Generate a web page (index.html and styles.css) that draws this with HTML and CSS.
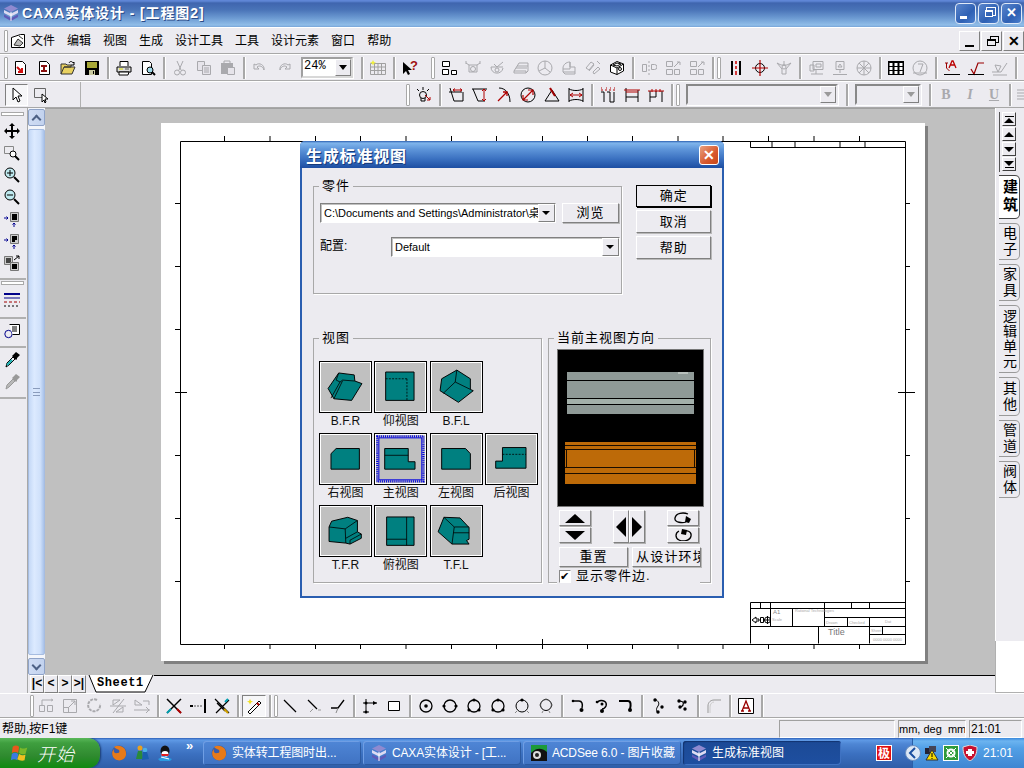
FILE: index.html
```html
<!DOCTYPE html>
<html lang="zh">
<head>
<meta charset="utf-8">
<title>CAXA实体设计</title>
<link rel="stylesheet" href="styles.css">
</head>
<body>
<svg class="sprite" xmlns="http://www.w3.org/2000/svg">
<defs>
<symbol id="caxa" viewBox="0 0 16 16"><path d="M8 0l7 3.500-7 3.500-7-3.500z" fill="#8f8ad0"/><path d="M1 5l7 3.500L15 5v3l-7 3.500L1 8z" fill="#dcdaf2"/><path d="M1 9.500L8 13l7-3.500V12l-7 4-7-4z" fill="#5f5ab8"/><path d="M8 7v9" stroke="#fff"/></symbol>
<symbol id="menudoc" viewBox="0 0 16 16"><path d="M1.500 4.500l9-3h4v13h-13z" fill="#fff" stroke="#000"/><path d="M4 12l4-6 5 4-3 3zM9 3l4 3" fill="#bbb" stroke="#333"/></symbol>
<symbol id="docred" viewBox="0 0 16 16"><path d="M3.500 1.500h7l3 3v10h-10z" fill="#fff" stroke="#000"/><path d="M5 7l5 5m0-4v4H6" stroke="#d01010" stroke-width="2" fill="none"/></symbol>
<symbol id="docbar" viewBox="0 0 16 16"><path d="M3.500 1.500h7l3 3v10h-10z" fill="#fff" stroke="#000"/><path d="M5 5h6v2H9v3h2v2H5v-2h2V7H5z" fill="#8a1010"/></symbol>
<symbol id="open" viewBox="0 0 16 16"><path d="M1 14V4h5l1 1h4v2H4l-3 7h11l3-7H4" fill="#e8d060" stroke="#333"/><path d="M9 3c1-2 3-2 4 0l1-1v3h-3" fill="none" stroke="#000"/></symbol>
<symbol id="save" viewBox="0 0 16 16"><path d="M1 1h14v14H1z" fill="#000"/><path d="M3 2h10v6H3z" fill="#a8a838"/><path d="M5 10h6v5H5z" fill="#c8c8a0"/><path d="M9 11h1v3H9z" fill="#000"/></symbol>
<symbol id="print" viewBox="0 0 16 16"><path d="M4 6V1.500h8V6" fill="#fff" stroke="#000"/><path d="M1 7h14v5H1z" fill="#ddd" stroke="#000"/><path d="M3 12h10l-1 3H3z" fill="#fff" stroke="#000"/><path d="M3 9h4" stroke="#dd0"/><path d="M9 9h4" stroke="#555"/></symbol>
<symbol id="prev" viewBox="0 0 16 16"><path d="M2.500 1.500h7l2 2v11h-9z" fill="#fff" stroke="#000"/><circle cx="10" cy="10" r="3" fill="#9fd8e8" stroke="#000"/><path d="M12 12l3 3" stroke="#000" stroke-width="2"/></symbol>
<symbol id="cut" viewBox="0 0 16 16"><g fill="none" stroke="currentColor"><path d="M5 1l4 9M11 1l-4 9"/><circle cx="5" cy="12.500" r="2.500"/><circle cx="11" cy="12.500" r="2.500"/></g></symbol>
<symbol id="copy" viewBox="0 0 16 16"><g fill="#e6e4ea" stroke="currentColor"><path d="M1.500 1.500h7v9h-7z"/><path d="M6.500 5.500h8v9h-8z"/><path d="M8 8h5M8 10h5M8 12h5"/></g></symbol>
<symbol id="paste" viewBox="0 0 16 16"><path d="M1 3h12v11H1z" fill="currentColor"/><path d="M4 1h6v3H4z" fill="none" stroke="currentColor"/><path d="M7.500 7.500h7v7h-7z" fill="#e6e4ea" stroke="currentColor"/></symbol>
<symbol id="undo" viewBox="0 0 16 16"><path d="M2 4v5h5L5 7c2-2 6-1 7 3 1-5-5-8-8-5z" fill="none" stroke="currentColor"/></symbol>
<symbol id="redo" viewBox="0 0 16 16"><path d="M14 4v5H9l2-2c-2-2-6-1-7 3-1-5 5-8 8-5z" fill="none" stroke="currentColor"/></symbol>
<symbol id="table" viewBox="0 0 16 16"><path d="M.5 3.500h15v11H.5zM.5 7h15M.5 10.500h15M4.500 3.500v11M8 3.500v11M11.500 3.500v11" fill="none" stroke="#a0a0a0"/><path d="M3 0l1 2 2 .5-2 1-1 2-1-2-2-1 2-.5z" fill="#f0f040"/></symbol>
<symbol id="help" viewBox="0 0 16 16"><path d="M1 2v12l3-3 2 4 2-1-2-4h4z" fill="#000"/><text x="8" y="10" font-family="Liberation Sans" font-weight="700" font-size="13" fill="#a01010">?</text></symbol>
<symbol id="blocks" viewBox="0 0 16 16"><path d="M1.500 1.500h7v5h-7zM1.500 9.500h6v5h-6zM10.500 10.500h5v4h-5z" fill="#fff" stroke="#000"/></symbol>
<symbol id="part1" viewBox="0 0 16 16"><g fill="none" stroke="currentColor"><path d="M1 3l3 2h8l3-2M4 5v7h8V5"/><circle cx="8" cy="9" r="2.500"/><path d="M1 1v3M15 1v3"/></g></symbol>
<symbol id="part2" viewBox="0 0 16 16"><g fill="none" stroke="currentColor"><path d="M2 7c0 8 11 8 12 1M2 7h12M5 4l3 3 6-5"/><circle cx="8" cy="10" r="2"/></g></symbol>
<symbol id="part3" viewBox="0 0 16 16"><g fill="none" stroke="currentColor"><path d="M1 11l5-8h9v8l-2 2H1zM3 8h11M4 6h11M1 11h12v2"/></g></symbol>
<symbol id="clock" viewBox="0 0 16 16"><g fill="none" stroke="currentColor"><circle cx="8" cy="8" r="7"/><path d="M8 1v7l5 4M8 8l-6 3"/></g></symbol>
<symbol id="part4" viewBox="0 0 16 16"><g fill="none" stroke="currentColor"><path d="M2 12V8c0-3 3-6 7-6v5h5v5H2zM2 9h7V2"/><path d="M2 12l2 2h10v-2"/></g></symbol>
<symbol id="part5" viewBox="0 0 16 16"><g fill="none" stroke="currentColor"><path d="M1 8l5-6 3 2-5 6zM4 11l5-6M9 14l6-5-2-2-5 5z"/><path d="M12 1l3 3"/></g></symbol>
<symbol id="cube" viewBox="0 0 16 16"><path d="M1.500 5L8 1.500 14.500 4v7L8 14.500 1.500 12z" fill="#fff" stroke="#000"/><path d="M1.500 5L8 8v6.500M8 8l6.500-4M4 5l4-2 4 1-4 2z" fill="none" stroke="#000"/><circle cx="11" cy="9" r="1.500" fill="none" stroke="#000"/></symbol>
<symbol id="mir" viewBox="0 0 16 16"><g fill="none" stroke="currentColor"><path d="M1.500 4.500h4v7h-4zM10.500 4.500h3a2 2 0 010 5h-3zM8 1v2M8 5v2M8 9v2M8 13v2"/></g></symbol>
<symbol id="mir2" viewBox="0 0 16 16"><g fill="none" stroke="currentColor"><path d="M1.500 1.500h6v5h-6zM1.500 9.500h6v5h-6zM9.500 9.500h5v5h-5zM9 7l5-5M12 2h3v3"/></g></symbol>
<symbol id="center" viewBox="0 0 16 16"><path d="M4 1v14M12 1v14" stroke="#000" stroke-width="2"/><path d="M8 1v3M8 6v3M8 11v4" stroke="#c00" stroke-width="1.500"/></symbol>
<symbol id="target" viewBox="0 0 16 16"><circle cx="8" cy="8" r="4.500" fill="none" stroke="#000"/><path d="M0 8h16M8 0v16" stroke="#b00000" stroke-width="1.200"/></symbol>
<symbol id="tri" viewBox="0 0 16 16"><g fill="none" stroke="currentColor"><path d="M1 3l4 2h6l4-2-5 6v5H6V9zM8 1v5"/><circle cx="8" cy="7" r="2"/></g></symbol>
<symbol id="surf1" viewBox="0 0 16 16"><g fill="none" stroke="currentColor"><path d="M5 1.500h10v8H5zM2 5h4v6H2zM8 4h5v3H8zM3 14h12M8 10v4"/></g></symbol>
<symbol id="surf2" viewBox="0 0 16 16"><g fill="none" stroke="currentColor"><path d="M4 1.500h8v8H4zM8 4l2 3H6zM8 10v3M1 14.500h14"/></g></symbol>
<symbol id="surf3" viewBox="0 0 16 16"><g fill="none" stroke="currentColor"><circle cx="8" cy="8" r="7"/><path d="M1 8h14M8 1v14M3 3l10 10M13 3L3 13"/></g></symbol>
<symbol id="tbl2" viewBox="0 0 16 16"><path d="M0 1h16v14H0z" fill="#000"/><path d="M1.500 3h3v3h-3zM6.500 3h3v3h-3zM11.500 3h3v3h-3zM1.500 7h3v3h-3zM6.500 7h3v3h-3zM11.500 7h3v3h-3zM1.500 11h3v3h-3zM6.500 11h3v3h-3zM11.500 11h3v3h-3z" fill="#fff"/></symbol>
<symbol id="seven" viewBox="0 0 16 16"><g fill="none" stroke="currentColor"><circle cx="8" cy="8" r="7"/><path d="M6 4h5l-3 8"/><path d="M1 13h14"/></g></symbol>
<symbol id="dimA" viewBox="0 0 16 16"><path d="M1 3h3M2.500 3v5l3 3" fill="none" stroke="#900"/><path d="M5 8l3-7h1l3 7M6.500 5h4" fill="none" stroke="#b00" stroke-width="1.300"/><path d="M0 14.500h16" stroke="#000"/></symbol>
<symbol id="rough" viewBox="0 0 16 16"><path d="M3 9l3 5 4-11h6" fill="none" stroke="#900" stroke-width="1.200"/><path d="M0 14.500h16" stroke="#000"/></symbol>
<symbol id="weld" viewBox="0 0 16 16"><g fill="none" stroke="currentColor"><path d="M0 12h9l6-9M3 5l3 7 3-6zM1 15h14"/></g></symbol>
<symbol id="light" viewBox="0 0 16 16"><g fill="none" stroke="#000"><circle cx="7" cy="8" r="3.500"/><path d="M5 11v3h4v-3M3 4L1 2M7 3V0M11 4l2-2"/></g><path d="M9 8l5 5m-3 0h3v-3" stroke="#b00000" fill="none"/></symbol>
<symbol id="d1" viewBox="0 0 16 16"><path d="M1 5h13M2 1l4 13h9V5" fill="none" stroke="#000"/><path d="M5 3h9M5 3l2-1.500M5 3l2 1.500M14 3l-2-1.500M14 3l-2 1.500" stroke="#b00000" fill="none"/></symbol>
<symbol id="d2" viewBox="0 0 16 16"><path d="M0 2h15M1 2l5 12h7" fill="none" stroke="#000"/><path d="M12 2v12M10 4l2-2 2 2M10 12l2 2 2-2" stroke="#b00000" fill="none"/></symbol>
<symbol id="d3" viewBox="0 0 16 16"><path d="M3 1c6 0 11 5 11 14" fill="none" stroke="#000"/><path d="M2 14L11 5M7 5h4v4" stroke="#b00000" fill="none" stroke-width="1.300"/></symbol>
<symbol id="d4" viewBox="0 0 16 16"><circle cx="8" cy="8" r="7" fill="none" stroke="#000"/><path d="M3 13L13 3M8 3h5v5M3 8v5h5" stroke="#b00000" fill="none" stroke-width="1.200"/></symbol>
<symbol id="d5" viewBox="0 0 16 16"><path d="M8 3l7 11H1z" fill="none" stroke="#000"/><path d="M6 1l5 8" stroke="#a00000" stroke-width="2"/></symbol>
<symbol id="d6" viewBox="0 0 16 16"><path d="M1 2c4 2 10 2 14 0M1 14c4-2 10-2 14 0M1 1v14M15 1v14" fill="none" stroke="#000"/><path d="M2 8h12M2 8l3-2M2 8l3 2M14 8l-3-2M14 8l-3 2" stroke="#b00000" fill="none"/></symbol>
<symbol id="e1" viewBox="0 0 16 16"><path d="M1 5h3v10M7 5h3v10h4V5" fill="none" stroke="#000"/><path d="M1 1h1M6 1h1M10 1h1M14 1h1M1 3h14" stroke="#b00000" stroke-dasharray="2 2"/></symbol>
<symbol id="e2" viewBox="0 0 16 16"><path d="M2 1v14M14 3v12M2 10h12" fill="none" stroke="#000"/><path d="M2 5h12M0 3h16" stroke="#b00000" fill="none"/></symbol>
<symbol id="e3" viewBox="0 0 16 16"><path d="M2 4v11M14 4v11M8 4v6M2 10h6" fill="none" stroke="#000"/><path d="M0 4h16M4 2v3M8 2v3M12 2v3" stroke="#b00000" fill="none"/></symbol>
<symbol id="lines" viewBox="0 0 16 16"><path d="M1 3h14M1 6h14M1 9h14M1 12h14" stroke="currentColor"/></symbol>
<symbol id="move" viewBox="0 0 16 16"><path d="M8 0l3 3H9v4h4V5l3 3-3 3V9H9v4h2l-3 3-3-3h2V9H3v2L0 8l3-3v2h4V3H5z" fill="#000"/></symbol>
<symbol id="zrect" viewBox="0 0 16 16"><path d="M.5 1.500h9v7h-9z" fill="none" stroke="#888"/><circle cx="9" cy="9" r="3" fill="#fff" stroke="#000"/><path d="M11 11l4 4" stroke="#000" stroke-width="2"/></symbol>
<symbol id="zplus" viewBox="0 0 16 16"><circle cx="6" cy="6" r="5" fill="#bfeaf0" stroke="#000"/><path d="M3 6h6M6 3v6" stroke="#000"/><path d="M10 10l5 5" stroke="#000" stroke-width="2"/></symbol>
<symbol id="zminus" viewBox="0 0 16 16"><circle cx="6" cy="6" r="5" fill="#bfeaf0" stroke="#000"/><path d="M3 6h6" stroke="#000"/><path d="M10 10l5 5" stroke="#000" stroke-width="2"/></symbol>
<symbol id="v1" viewBox="0 0 16 16"><path d="M6.500 1.500h8v9h-8z" fill="#ccc" stroke="#777"/><path d="M8 3h5v6H8z" fill="#000"/><path d="M0 7h4M2.500 5.500L4 7l-1.500 1.500M10 12v4M8.500 13.500L10 12l1.500 1.500" stroke="#000090" fill="none"/></symbol>
<symbol id="v2" viewBox="0 0 16 16"><path d="M6.500 1.500h8v9h-8z" fill="#ccc" stroke="#777"/><path d="M8 3h5v4h-2v2H8z" fill="#000"/><path d="M0 7h4M2.500 5.500L4 7l-1.500 1.500M10 12v4M8.500 13.500L10 12l1.500 1.500" stroke="#000090" fill="none"/></symbol>
<symbol id="v3" viewBox="0 0 16 16"><path d="M.5 1.500h8v8h-8z" fill="#ccc" stroke="#777"/><path d="M2 3h5v5H2z" fill="#444"/><path d="M6.500 7.500h8v8h-8z" fill="#ccc" stroke="#777"/><path d="M8 9h5v5H8z" fill="#000"/><path d="M10 5l5-4m-3 0h3v3" stroke="#000" fill="none"/></symbol>
<symbol id="ltypes" viewBox="0 0 16 16"><path d="M0 2h16" stroke="#00008a" stroke-width="2"/><path d="M0 6h16" stroke="#00008a"/><path d="M0 10h16" stroke="#a00000" stroke-dasharray="3 2"/><path d="M0 14h16" stroke="#000" stroke-dasharray="2 2"/></symbol>
<symbol id="prop" viewBox="0 0 16 16"><circle cx="4.500" cy="11" r="3.700" fill="none" stroke="#00008a"/><path d="M5.500 1.500h10v10h-7" fill="#fff" stroke="#000"/><path d="M8 4h5M8 6h5M8 8h5" stroke="#000"/></symbol>
<symbol id="drop" viewBox="0 0 16 16"><path d="M2 15l1-4 6-6 2 2-6 6z" fill="none" stroke="#000"/><path d="M3 13l5-5" stroke="#18b0b0" stroke-width="2"/><path d="M9 3l3-3 4 3-3 3v1l-1 1-4-4 1-1z" fill="#000"/></symbol>
<symbol id="drop2" viewBox="0 0 16 16"><path d="M2 15l1-4 6-6 2 2-6 6z" fill="#b8b8b8" stroke="#999"/><path d="M9 3l3-3 4 3-3 3v1l-1 1-4-4 1-1z" fill="#999"/></symbol>
<symbol id="b1" viewBox="0 0 16 16"><g fill="none" stroke="currentColor"><path d="M1.500 7.500h5v6h-5zM9.500 7.500h5v6h-5zM4 7V2M4 2h9M13 1l2 1-2 1"/></g></symbol>
<symbol id="b2" viewBox="0 0 16 16"><g fill="none" stroke="currentColor"><path d="M1.500 1.500h13v13h-13zM1.500 9.500h5v5M6 10l7-7M9 3h4v4"/></g></symbol>
<symbol id="b3" viewBox="0 0 16 16"><path d="M11 2a6 6 0 103 4" fill="none" stroke="currentColor" stroke-width="2" stroke-dasharray="3 1"/></symbol>
<symbol id="b4" viewBox="0 0 16 16"><g fill="none" stroke="currentColor"><path d="M0 8h16M3 15L14 1M3 2h7l-7 5zM13 14H6l7-5z"/></g></symbol>
<symbol id="b5" viewBox="0 0 16 16"><g fill="none" stroke="currentColor"><path d="M1 2l7 5H1zM0 12h16M9 3h6v4M12 9l3 3-3 3"/></g></symbol>
<symbol id="trim" viewBox="0 0 16 16"><path d="M1 1l14 14" stroke="#000" stroke-width="1.500"/><path d="M1 15L15 1" stroke="#000" stroke-width="1.500"/><path d="M11 11l4 4" stroke="#b00000" stroke-width="2"/><path d="M1 15l4-4" stroke="#00a0b0" stroke-width="2"/></symbol>
<symbol id="ext" viewBox="0 0 16 16"><path d="M0 8h3" stroke="#000" stroke-width="2"/><path d="M4 8h9" stroke="#555" stroke-dasharray="2 1"/><path d="M15 1v14" stroke="#000" stroke-width="2"/></symbol>
<symbol id="trim2" viewBox="0 0 16 16"><path d="M2 15L15 2M1 1l14 14M3 5l8 8" stroke="#000" fill="none" stroke-width="1.200"/><path d="M11 4l3-3" stroke="#00a0b0" stroke-width="2"/><path d="M10 11l4 4" stroke="#d0a000" stroke-width="2"/></symbol>
<symbol id="pen" viewBox="0 0 16 16"><path d="M2 14L13 3l2 2L4 16z" fill="#fff" stroke="#000"/><path d="M11 5l2 2" stroke="#b00000" stroke-width="2"/><path d="M4 1l1 2 2 .5-2 1-1 2-1-2-2-1 2-.5z" fill="#f0e020"/></symbol>
<symbol id="ln1" viewBox="0 0 16 16"><path d="M2 2l12 12" stroke="#000" stroke-width="1.300"/></symbol>
<symbol id="ln2" viewBox="0 0 16 16"><path d="M2 2l9 9" stroke="#000" stroke-width="1.300"/><path d="M7 11l-3 3M12 12h3" stroke="#999"/></symbol>
<symbol id="ln3" viewBox="0 0 16 16"><path d="M1 10h7l6-8" stroke="#000" fill="none" stroke-width="1.300"/><path d="M8 10l-2 5" stroke="#888"/></symbol>
<symbol id="ortho" viewBox="0 0 16 16"><path d="M4 1v14M1 5h14M1 14h6" stroke="#000" fill="none"/><path d="M11 3l4 2-4 2z" fill="#000"/><circle cx="4" cy="5" r="1.500"/><circle cx="4" cy="14" r="1.500"/></symbol>
<symbol id="rect" viewBox="0 0 16 16"><path d="M2.500 3.500h11v9h-11z" fill="#fff" stroke="#000"/></symbol>
<symbol id="c1" viewBox="0 0 16 16"><circle cx="8" cy="8" r="6" fill="none" stroke="#000" stroke-width="1.300"/><circle cx="8" cy="8" r="1.800"/></symbol>
<symbol id="c2" viewBox="0 0 16 16"><circle cx="8" cy="8" r="6" fill="none" stroke="#000" stroke-width="1.300"/><circle cx="2" cy="8" r="1.600"/><circle cx="14" cy="8" r="1.600"/></symbol>
<symbol id="c3" viewBox="0 0 16 16"><circle cx="8" cy="8" r="6" fill="none" stroke="#000" stroke-width="1.300"/><circle cx="8" cy="2" r="1.600"/><circle cx="3" cy="12" r="1.600"/><circle cx="13" cy="12" r="1.600"/></symbol>
<symbol id="c4" viewBox="0 0 16 16"><circle cx="8" cy="8" r="6" fill="none" stroke="#000"/><circle cx="8" cy="2" r="1.600"/><path d="M3 13l-2 2M13 13l2 2" stroke="#888"/></symbol>
<symbol id="c5" viewBox="0 0 16 16"><circle cx="8" cy="7" r="5.500" fill="none" stroke="#000"/><path d="M1 7h2M13 7h2M5 13l-1 2M11 13l1 2M8 0v2" stroke="#888"/></symbol>
<symbol id="a1" viewBox="0 0 16 16"><path d="M2 3h7c3 0 4 3 3 7" fill="none" stroke="#000" stroke-width="1.500"/><circle cx="11.500" cy="12" r="2"/><circle cx="3" cy="3" r="1.300"/></symbol>
<symbol id="a2" viewBox="0 0 16 16"><path d="M3 5c2-4 11-3 9 3-1 2-3 3-4 3" fill="none" stroke="#000" stroke-width="1.500"/><circle cx="8" cy="13" r="2"/><circle cx="8" cy="6" r="1.500"/><circle cx="3" cy="4" r="1.300"/></symbol>
<symbol id="a3" viewBox="0 0 16 16"><path d="M1 3h9c3 0 3 4 2 8" fill="none" stroke="#000" stroke-width="2"/><circle cx="12" cy="12" r="2"/></symbol>
<symbol id="s1" viewBox="0 0 16 16"><path d="M5 1c3 2 5 4 3 7s-2 4 0 7" fill="none" stroke="#000"/><circle cx="5" cy="2" r="1.700"/><circle cx="12" cy="9" r="1.700"/><circle cx="8" cy="14" r="1.700"/></symbol>
<symbol id="s2" viewBox="0 0 16 16"><path d="M5 3c6 0 5 4 2 6" fill="none" stroke="#000" stroke-width="1.200"/><circle cx="5" cy="3" r="1.700"/><circle cx="11" cy="4" r="1.700"/><circle cx="6" cy="9" r="1.700"/><circle cx="11" cy="11" r="1.700"/></symbol>
<symbol id="fil" viewBox="0 0 16 16"><path d="M2 15V8c0-4 3-6 6-6h7" fill="none" stroke="#999"/><path d="M4 15V9c0-3 2-5 4-5" fill="none" stroke="#ccc"/></symbol>
<symbol id="boxA" viewBox="0 0 16 16"><path d="M.5.500h15v15H.5z" fill="#fff" stroke="#000"/><path d="M4 13l4-10 4 10M5 10h6M3 13h3M10 13h3" fill="none" stroke="#900" stroke-width="1.300"/></symbol>
<symbol id="ff" viewBox="0 0 16 16"><circle cx="8" cy="8" r="7.500" fill="#3a5da8"/><path d="M3 2c5-3 13 0 12 8-1 5-7 7-11 4C1 12 0 7 3 4c-1 3 1 5 3 4 2 0 3-1 2-3C7 4 5 4 3 2z" fill="#e87a18"/></symbol>
<symbol id="msn" viewBox="0 0 16 16"><circle cx="6" cy="3" r="2.500" fill="#e8a020"/><path d="M2 14l2-8h4l1 8z" fill="#2a8a3a"/><circle cx="11" cy="5" r="2.300" fill="#4ab0e8"/><path d="M8 15l1-8h4l2 7z" fill="#1a5fb0"/></symbol>
<symbol id="qq" viewBox="0 0 16 16"><ellipse cx="8" cy="6" rx="4.500" ry="5.500" fill="#111"/><ellipse cx="8" cy="9" rx="3.500" ry="3" fill="#fff"/><path d="M4 9h8l-1 2H5z" fill="#e02020"/><path d="M1 14l6-3 8 3-2 2H3z" fill="#2a9ae0"/><path d="M4 12l8 2" stroke="#fff"/></symbol>
<symbol id="acd" viewBox="0 0 16 16"><path d="M0 0h16v16H0z" fill="#111"/><path d="M0 0h16v7C10 2 5 3 0 8z" fill="#1c9a3a"/><circle cx="6" cy="10" r="4" fill="#ddd"/><circle cx="6" cy="10" r="2" fill="#222"/></symbol>
<symbol id="flag" viewBox="0 0 22 22"><path d="M3 4c3-2 5-1 7 0l-1 7c-2-1-4-2-7 0z" fill="#e8581c"/><path d="M11 5c2 1 4 2 8 0l-2 7c-3 1-5 0-7-1z" fill="#7ab82a"/><path d="M2 12c3-2 5-1 7 0l-1 7c-2-1-4-2-7 0z" fill="#3a7ae0"/><path d="M10 12c2 1 4 2 7 1l-1 6c-3 1-6 0-8-1z" fill="#f0c020"/></symbol>
<symbol id="back" viewBox="0 0 16 16"><circle cx="8" cy="8" r="7.500" fill="#dce8f6" stroke="#6a8ec0"/><path d="M10 3L5 8l5 5" fill="none" stroke="#1a4fa0" stroke-width="2"/></symbol>
<symbol id="net" viewBox="0 0 16 16"><path d="M1 3h7v6H1z" fill="#223"/><path d="M5 1h7v6H5z" fill="#445"/><path d="M8 5l6 10H2z" fill="#f5d800" stroke="#333"/><path d="M8 8v4M8 13v1" stroke="#000"/></symbol>
<symbol id="green" viewBox="0 0 16 16"><path d="M0 0h16v16H0z" fill="#fff"/><path d="M1 1h14v14H1z" fill="#2e9a3a"/><circle cx="8" cy="8" r="3.500" fill="none" stroke="#fff" stroke-width="2"/><path d="M3 3l10 10M13 3L3 13" stroke="#fff"/></symbol>
<symbol id="shield" viewBox="0 0 16 16"><path d="M8 0l7 2c0 7-2 11-7 14C3 13 1 9 1 2z" fill="#c8102e" stroke="#ddd"/><path d="M6 4h4v2h2v3h-2v2H6V9H4V6h2z" fill="#fff"/></symbol>
<symbol id="rot1" viewBox="0 0 24 12"><path d="M17 2C12 0 5 1 4 6s8 5 11 4" fill="none" stroke="#000" stroke-width="1.300"/><path d="M15 4l5 3-2 4-4-1z" fill="#000"/></symbol>
<symbol id="rot2" viewBox="0 0 24 12"><path d="M8 2c-4 2-4 7 0 9s11 1 12-4-5-6-8-5" fill="none" stroke="#000" stroke-width="1.300"/><path d="M11 0l5 1-1 5-5-1z" fill="#000"/></symbol>
</defs>
</svg>

<div class="app">
  <header class="title">
    <svg class="ic"><use href="#caxa"/></svg>
    <span class="title-text">CAXA实体设计 - [工程图2]</span>
    <span class="win-btns">
      <span class="wb"><span class="wb-min"></span></span>
      <span class="wb"><span class="wb-max"></span></span>
      <span class="wb wb-x">✕</span>
    </span>
  </header>

  <nav class="menubar">
    <span class="grip"></span>
    <svg class="ic menu-ic"><use href="#menudoc"/></svg>
    <span>文件</span><span>编辑</span><span>视图</span><span>生成</span><span>设计工具</span><span>工具</span><span>设计元素</span><span>窗口</span><span>帮助</span>
    <span class="mdi">
      <span class="mb"><span class="mb-min"></span></span>
      <span class="mb"><span class="mb-max"></span></span>
      <span class="mb mb-x">✕</span>
    </span>
  </nav>

  <div class="tb row1">
    <span class="grip"></span>
    <span class="i"><svg class="ic"><use href="#docred"/></svg></span>
    <span class="i"><svg class="ic"><use href="#docbar"/></svg></span>
    <span class="i"><svg class="ic"><use href="#open"/></svg></span>
    <span class="i"><svg class="ic"><use href="#save"/></svg></span>
    <span class="sep"></span>
    <span class="i"><svg class="ic"><use href="#print"/></svg></span>
    <span class="i"><svg class="ic"><use href="#prev"/></svg></span>
    <span class="sep"></span>
    <span class="i off"><svg class="ic"><use href="#cut"/></svg></span>
    <span class="i off"><svg class="ic"><use href="#copy"/></svg></span>
    <span class="i off"><svg class="ic"><use href="#paste"/></svg></span>
    <span class="sep"></span>
    <span class="i off"><svg class="ic"><use href="#undo"/></svg></span>
    <span class="i off"><svg class="ic"><use href="#redo"/></svg></span>
    <span class="tcombo tc-zoom"><span class="tc-val">24%</span><span class="tc-arrow"></span></span>
    <span class="sep sep-z"></span>
    <span class="i"><svg class="ic"><use href="#table"/></svg></span>
    <span class="sep"></span>
    <span class="i"><svg class="ic"><use href="#help"/></svg></span>
    <span class="grip grip-a"></span>
    <span class="i"><svg class="ic"><use href="#blocks"/></svg></span>
    <span class="i off"><svg class="ic"><use href="#part1"/></svg></span>
    <span class="i off"><svg class="ic"><use href="#part2"/></svg></span>
    <span class="i off"><svg class="ic"><use href="#part3"/></svg></span>
    <span class="i off"><svg class="ic"><use href="#clock"/></svg></span>
    <span class="i off"><svg class="ic"><use href="#part4"/></svg></span>
    <span class="i off"><svg class="ic"><use href="#part5"/></svg></span>
    <span class="i"><svg class="ic"><use href="#cube"/></svg></span>
    <span class="sep"></span>
    <span class="i off"><svg class="ic"><use href="#mir"/></svg></span>
    <span class="i off"><svg class="ic"><use href="#mir2"/></svg></span>
    <span class="i off"><svg class="ic"><use href="#mir2"/></svg></span>
    <span class="sep"></span>
    <span class="grip grip-b"></span>
    <span class="i"><svg class="ic"><use href="#center"/></svg></span>
    <span class="i"><svg class="ic"><use href="#target"/></svg></span>
    <span class="i off"><svg class="ic"><use href="#tri"/></svg></span>
    <span class="sep"></span>
    <span class="i off"><svg class="ic"><use href="#surf1"/></svg></span>
    <span class="i off"><svg class="ic"><use href="#surf2"/></svg></span>
    <span class="i off"><svg class="ic"><use href="#surf3"/></svg></span>
    <span class="sep"></span>
    <span class="i"><svg class="ic"><use href="#tbl2"/></svg></span>
    <span class="i off"><svg class="ic"><use href="#seven"/></svg></span>
    <span class="sep"></span>
    <span class="i"><svg class="ic"><use href="#dimA"/></svg></span>
    <span class="i"><svg class="ic"><use href="#rough"/></svg></span>
    <span class="i off"><svg class="ic"><use href="#weld"/></svg></span>
    <span class="sep"></span>
  </div>

  <div class="tb row2">
    <span class="sel-tools">
      <span class="i pressed"><svg class="ic" viewBox="0 0 16 16"><path d="M4 1v12l3-3 2 5 2-1-2-5h4z" fill="#fff" stroke="#000"/></svg></span>
      <span class="i"><svg class="ic" viewBox="0 0 16 16"><path d="M1.500 1.500h11v9h-11z" fill="none" stroke="#666"/><path d="M9 7v8l2-2 1 3 1-1-1-3h3z" fill="#fff" stroke="#000"/></svg></span>
    </span>
    <span class="grip grip-c"></span>
    <span class="i"><svg class="ic"><use href="#light"/></svg></span>
    <span class="sep"></span>
    <span class="i"><svg class="ic"><use href="#d1"/></svg></span>
    <span class="i"><svg class="ic"><use href="#d2"/></svg></span>
    <span class="i"><svg class="ic"><use href="#d3"/></svg></span>
    <span class="i"><svg class="ic"><use href="#d4"/></svg></span>
    <span class="i"><svg class="ic"><use href="#d5"/></svg></span>
    <span class="i"><svg class="ic"><use href="#d6"/></svg></span>
    <span class="sep"></span>
    <span class="i"><svg class="ic"><use href="#e1"/></svg></span>
    <span class="i"><svg class="ic"><use href="#e2"/></svg></span>
    <span class="i"><svg class="ic"><use href="#e3"/></svg></span>
    <span class="sep"></span>
    <span class="grip"></span>
    <span class="tcombo tc-font"><span class="tc-val"></span><span class="tc-arrow off"></span></span>
    <span class="sep sep-f"></span>
    <span class="tcombo tc-size"><span class="tc-val"></span><span class="tc-arrow off"></span></span>
    <span class="sep sep-f"></span>
    <span class="i off fmt b">B</span>
    <span class="i off fmt it">I</span>
    <span class="i off fmt u">U</span>
    <span class="sep"></span>
    <span class="i off i-last"><svg class="ic"><use href="#lines"/></svg></span>
  </div>

  <main class="main">
    <aside class="ltb">
      <span class="hgrip"></span>
      <span class="v v-first"><svg class="ic"><use href="#move"/></svg></span>
      <span class="v"><svg class="ic"><use href="#zrect"/></svg></span>
      <span class="v"><svg class="ic"><use href="#zplus"/></svg></span>
      <span class="v"><svg class="ic"><use href="#zminus"/></svg></span>
      <span class="v"><svg class="ic"><use href="#v1"/></svg></span>
      <span class="v"><svg class="ic"><use href="#v2"/></svg></span>
      <span class="v"><svg class="ic"><use href="#v3"/></svg></span>
      <span class="hsep"></span>
      <span class="hgrip"></span>
      <span class="v v-lines"><svg class="ic"><use href="#ltypes"/></svg></span>
      <span class="hsep"></span>
      <span class="v"><svg class="ic"><use href="#prop"/></svg></span>
      <span class="hsep"></span>
      <span class="v"><svg class="ic"><use href="#drop"/></svg></span>
      <span class="v"><svg class="ic"><use href="#drop2"/></svg></span>
      <span class="hsep"></span>
    </aside>

    <section class="center">
      <div class="work">
        <div class="vscroll">
          <span class="sb-btn"><span class="chev up"></span></span>
          <span class="sb-thumb"><span class="sb-grip"></span></span>
          <span class="sb-btn"><span class="chev down"></span></span>
        </div>
        <div class="canvas">
          <svg class="paper" viewBox="161 123 764 538" width="764" height="538">
            <path class="frame" d="M180.500 141.500h725v503h-725z"/>
            <path class="ticks" d="M224.500 136v5M270 136v5M315.500 136v5M360.500 136v5M406 136v5M451.500 136v5M496.500 136v5M542.500 136v10M587.500 136v5M632.500 136v5M678 136v5M723 136v5M768.500 136v5M814 136v5M859.500 136v5M224.500 644v5M270 644v5M315.500 644v5M360.500 644v5M406 644v5M451.500 644v5M496.500 644v5M542.500 639v10M587.500 644v5M632.500 644v5M678 644v5M723 644v5M768.500 644v5M814 644v5M859.500 644v5M175 203.500h5M175 266.500h5M175 329.500h5M175 392.500h12M175 455.500h5M175 518.500h5M175 581.500h5M905 203.500h5M905 266.500h5M905 329.500h5M898 392.500h17M905 455.500h5M905 518.500h5M905 581.500h5"/>
            <path class="ticks" d="M750.500 141v6.500h155M772 141v6M795 141v6M840 141v6M865 141v6"/>
            <path class="ticks" d="M750.500 602.500h155M750.500 602.500v41M750.500 608.500h155M824.500 617.500h81M750.500 626.500h155M760.500 602.500v6M770.500 602.500v24M824.500 602.500v24M851.500 602.500v6M869.500 602.500v6M792.500 608.500v18M847.500 617.500v9M869.500 617.500v26M818.500 626.500v17M882.500 626.500v8M869.500 634.500h36"/>
            <path class="ticks" d="M752 620l4-3v2h3v2h-3v2zM760.500 617.500v5h3v-5zM767.500 616v8M764 620h7"/>
            <circle class="ticks" cx="767.500" cy="620" r="3"/>
            <text class="tb-title" x="828" y="635">Title</text>
            <text class="tb-a1" x="773" y="614">A1</text>
            <text class="tb-tiny" x="795" y="612">Rational Technologies</text>
            <text class="tb-tiny" x="772" y="621">Scale</text>
            <text class="tb-tiny" x="826" y="624">Drawn</text>
            <text class="tb-tiny" x="849" y="624">Checked</text>
            <text class="tb-tiny" x="885" y="623">Dat</text>
            <text class="tb-tiny" x="871" y="632">Sheet</text>
            <text class="tb-tiny" x="873" y="641">0000 0000 0000</text>
          </svg>
        </div>
      </div>
      <div class="sheetbar">
        <span class="snav">|&lt;</span><span class="snav">&lt;</span><span class="snav">&gt;</span><span class="snav">&gt;|</span>
        <svg class="tabshape" viewBox="0 0 66 18"><path d="M1 0l7 17h49L65 0" fill="#fff" stroke="#000"/></svg>
        <span class="sheet-label">Sheet1</span>
        <span class="sheet-line"></span>
      </div>
    </section>

    <aside class="rtb">
      <div class="rnav">
        <span class="rb"><span class="bar-t"></span><span class="tr up"></span></span>
        <span class="rb"><span class="tr up"></span></span>
        <span class="rb"><span class="tr down"></span></span>
        <span class="rb"><span class="tr down"></span><span class="bar-b"></span></span>
      </div>
      <span class="vtab active">建筑</span>
      <span class="vtab h36">电子</span>
      <span class="vtab h37">家具</span>
      <span class="vtab h67">逻辑单元</span>
      <span class="vtab h39">其他</span>
      <span class="vtab h37">管道</span>
      <span class="vtab h37">阀体</span>
      <span class="rblock"></span>
    </aside>
  </main>

  <div class="tb row3">
    <span class="grip"></span>
    <span class="i off"><svg class="ic"><use href="#b1"/></svg></span>
    <span class="i off"><svg class="ic"><use href="#b2"/></svg></span>
    <span class="i off"><svg class="ic"><use href="#b3"/></svg></span>
    <span class="i off"><svg class="ic"><use href="#b4"/></svg></span>
    <span class="i off"><svg class="ic"><use href="#b5"/></svg></span>
    <span class="sep"></span>
    <span class="i"><svg class="ic"><use href="#trim"/></svg></span>
    <span class="i"><svg class="ic"><use href="#ext"/></svg></span>
    <span class="i"><svg class="ic"><use href="#trim2"/></svg></span>
    <span class="sep"></span>
    <span class="i pressed2"><svg class="ic"><use href="#pen"/></svg></span>
    <span class="sep"></span>
    <span class="grip"></span>
    <span class="i"><svg class="ic"><use href="#ln1"/></svg></span>
    <span class="i"><svg class="ic"><use href="#ln2"/></svg></span>
    <span class="i"><svg class="ic"><use href="#ln3"/></svg></span>
    <span class="sep"></span>
    <span class="i"><svg class="ic"><use href="#ortho"/></svg></span>
    <span class="i"><svg class="ic"><use href="#rect"/></svg></span>
    <span class="sep"></span>
    <span class="i"><svg class="ic"><use href="#c1"/></svg></span>
    <span class="i"><svg class="ic"><use href="#c2"/></svg></span>
    <span class="i"><svg class="ic"><use href="#c3"/></svg></span>
    <span class="i"><svg class="ic"><use href="#c3"/></svg></span>
    <span class="i"><svg class="ic"><use href="#c4"/></svg></span>
    <span class="i"><svg class="ic"><use href="#c5"/></svg></span>
    <span class="sep"></span>
    <span class="i"><svg class="ic"><use href="#a1"/></svg></span>
    <span class="i"><svg class="ic"><use href="#a2"/></svg></span>
    <span class="i"><svg class="ic"><use href="#a3"/></svg></span>
    <span class="sep"></span>
    <span class="i"><svg class="ic"><use href="#s1"/></svg></span>
    <span class="i"><svg class="ic"><use href="#s2"/></svg></span>
    <span class="sep"></span>
    <span class="i"><svg class="ic"><use href="#fil"/></svg></span>
    <span class="sep"></span>
    <span class="i"><svg class="ic"><use href="#boxA"/></svg></span>
    <span class="sep"></span>
  </div>

  <footer class="status">
    <span class="st-text">帮助,按F1键</span>
    <span class="st-p st-a"></span>
    <span class="st-p st-b">mm, deg&nbsp;&nbsp;mm</span>
    <span class="st-p st-c">21:01</span>
  </footer>

  <div class="taskbar">
    <span class="start"><svg class="flag"><use href="#flag"/></svg><span class="start-t">开始</span></span>
    <span class="quick">
      <svg class="ic"><use href="#ff"/></svg>
      <svg class="ic"><use href="#msn"/></svg>
      <svg class="ic"><use href="#qq"/></svg>
      <span class="more">»</span>
    </span>
    <span class="tk"><svg class="ic"><use href="#ff"/></svg>实体转工程图时出...</span>
    <span class="tk"><svg class="ic"><use href="#caxa"/></svg>CAXA实体设计 - [工...</span>
    <span class="tk"><svg class="ic"><use href="#acd"/></svg>ACDSee 6.0 - 图片收藏</span>
    <span class="tk active"><svg class="ic"><use href="#caxa"/></svg>生成标准视图</span>
    <span class="ji">极</span>
    <span class="tray">
      <svg class="ic tray-back"><use href="#back"/></svg>
      <svg class="ic tray-tight"><use href="#net"/></svg>
      <svg class="ic tray-tight"><use href="#green"/></svg>
      <svg class="ic tray-tight"><use href="#shield"/></svg>
      <span class="clock">21:01</span>
    </span>
  </div>

  <div class="dialog">
    <div class="dlg-title">
      <span class="dlg-t">生成标准视图</span>
      <span class="dlg-x">✕</span>
    </div>
    <div class="dlg-body">
      <div class="dlg-top">
        <fieldset class="grp g-part">
          <legend>零件</legend>
          <div class="frow">
            <span class="combo c-path"><span class="cv">C:\Documents and Settings\Administrator\桌面\实体</span><span class="ca"></span></span>
            <span class="btn b-browse">浏览</span>
          </div>
          <div class="frow frow2">
            <span class="flabel">配置:</span>
            <span class="combo c-conf"><span class="cv">Default</span><span class="ca"></span></span>
          </div>
        </fieldset>
        <div class="dlg-btns">
          <span class="btn def">确定</span>
          <span class="btn">取消</span>
          <span class="btn">帮助</span>
        </div>
      </div>
      <div class="dlg-low">
        <fieldset class="grp g-views">
          <legend>视图</legend>
          <div class="thumbs">
            <figure class="th">
              <svg class="thumb" viewBox="0 0 158 155"><path class="t" d="M58 34l48 6 2 19 22 8-32 52-55-5-18-32z"/><path class="tl" d="M58 34l-8 22 12 6 8-6 38 3M62 62l-28 50M70 58L43 114"/></svg>
              <figcaption>B.F.R</figcaption>
            </figure>
            <figure class="th">
              <svg class="thumb" viewBox="0 0 158 155"><path class="t" d="M33 31h88v88H33z"/><path class="td" d="M33 52h67M99 52v67"/></svg>
              <figcaption>仰视图</figcaption>
            </figure>
            <figure class="th">
              <svg class="thumb" viewBox="0 0 158 155"><path class="t" d="M80 25l42 27v33l9 4-46 36-57-36 5-37z"/><path class="tl" d="M75 62l5-37M75 62l47 23M75 62L38 97"/></svg>
              <figcaption>B.F.L</figcaption>
            </figure>
            <span class="th-empty"></span>
            <figure class="th">
              <svg class="thumb" viewBox="0 0 158 155"><path class="t" d="M50 45h72v64H34V61z"/></svg>
              <figcaption>右视图</figcaption>
            </figure>
            <figure class="th sel">
              <svg class="thumb" viewBox="0 0 158 155"><path class="t" d="M30 45h73v41h21v23H30z"/><path class="tl" d="M30 66h73"/><rect class="selbox" x="7" y="7" width="143" height="140"/><rect class="selline" x="12" y="12" width="133" height="130"/></svg>
              <figcaption>主视图</figcaption>
            </figure>
            <figure class="th">
              <svg class="thumb" viewBox="0 0 158 155"><path class="t" d="M33 45h74l15 16v48H33z"/></svg>
              <figcaption>左视图</figcaption>
            </figure>
            <figure class="th">
              <svg class="thumb" viewBox="0 0 158 155"><path class="t" d="M51 42h73v64H30V84h21z"/><path class="td" d="M51 63h73"/></svg>
              <figcaption>后视图</figcaption>
            </figure>
            <figure class="th">
              <svg class="thumb" viewBox="0 0 158 155"><path class="t" d="M28 65l8-18 50-12 30 10v35l12 7v13l-35 18-13-3-52-5z"/><path class="tl" d="M28 65l50 6 38-26M78 71l2 44M80 100l36-20M93 118v-12l35-19"/></svg>
              <figcaption>T.F.R</figcaption>
            </figure>
            <figure class="th">
              <svg class="thumb" viewBox="0 0 158 155"><path class="t" d="M36 34h85v88H36z"/><path class="tl" d="M98 34v88M36 103h62"/></svg>
              <figcaption>俯视图</figcaption>
            </figure>
            <figure class="th">
              <svg class="thumb" viewBox="0 0 158 155"><path class="t" d="M40 35l50 2 28 30v36l-8 4 8 11H65L22 80z"/><path class="tl" d="M40 35l32 30-7 53M72 65h46M70 83h48"/></svg>
              <figcaption>T.F.L</figcaption>
            </figure>
          </div>
        </fieldset>
        <fieldset class="grp g-dir">
          <legend>当前主视图方向</legend>
          <svg class="preview" viewBox="0 0 145 156" width="147" height="158">
            <path d="M0 0h145v156H0z" fill="#000"/>
            <path d="M9 22h127v42H9z" fill="#8f9a97"/>
            <path d="M9 48h127v6H9z" fill="#a3b0aa"/>
            <path d="M120 22h10v2h-10z" fill="#b8c0bc"/>
            <path d="M9 30.500h127M9 48.500h127M9 54.500h127" stroke="#000"/>
            <path d="M7 92h131v42H7z" fill="#bd6a08"/>
            <path d="M7 95.500h131M7 99.500h131M7 117.500h131M7 123.500h131M8.500 99v18M136.500 99v18" stroke="#1a0d00"/>
          </svg>
          <div class="ctrls">
            <div class="cstack">
              <span class="cb"><span class="ar ar-up"></span></span>
              <span class="cb"><span class="ar ar-down"></span></span>
            </div>
            <div class="cpair">
              <span class="cb cb-v"><span class="ar ar-left"></span></span>
              <span class="cb cb-v"><span class="ar ar-right"></span></span>
            </div>
            <div class="cstack">
              <span class="cb"><svg class="rot"><use href="#rot1"/></svg></span>
              <span class="cb"><svg class="rot"><use href="#rot2"/></svg></span>
            </div>
          </div>
          <div class="wide">
            <span class="btn b-wide">重置</span>
            <span class="btn b-wide b-clip"><span class="clipt">从设计环境</span></span>
          </div>
          <label class="chk"><span class="box">✔</span><span>显示零件边.</span></label>
        </fieldset>
      </div>
    </div>
  </div>
</div>
</body>
</html>
```
FILE: styles.css
```css
* { box-sizing: border-box; }
html, body { margin: 0; padding: 0; }
body {
  width: 1024px; height: 768px; overflow: hidden; background: #ecebf0; color: #000;
  font: 12px/14px "Liberation Sans", "Noto Sans CJK SC", sans-serif;
}
.sprite { position: absolute; width: 0; height: 0; }
.ic { width: 16px; height: 16px; display: block; flex: none; }
.app {
  position: relative; width: 1024px; height: 768px; overflow: hidden;
  display: grid; grid-template-rows: 27px 27px 27px 27px 585px 25px 20px 30px;
}

/* title bar */
.title {
  display: flex; align-items: center; padding: 0 2px 1px 3px; gap: 3px; color: #fff;
  background: linear-gradient(#5f86d6 0, #5f86d6 1px, #3f65ae 3px, #4a74b8 10px, #6c9ad2 18px, #90bde8 25px, #78a4d8 27px);
}
.title-text { font: 700 14px/18px "Liberation Sans", "Noto Sans CJK SC", sans-serif; letter-spacing: .9px; text-shadow: 1px 1px 0 #2c4c88; }
.win-btns { margin-left: auto; display: flex; gap: 2px; }
.wb {
  width: 21px; height: 21px; border: 1px solid #dfe9f8; border-radius: 4px; position: relative; color: #fff;
  background: linear-gradient(135deg, #5b86cc, #2e60b4 60%, #4a7ecc); display: flex; align-items: center; justify-content: center;
  font-size: 13px; font-weight: 700;
}
.wb-min { width: 7px; height: 3px; background: #fff; margin: 9px 5px 0 0; }
.wb-max { width: 8px; height: 7px; border: 1px solid #fff; border-top-width: 2px; box-shadow: 2px -2px 0 -0px #3a68b8, 2px -2px 0 1px #fff; }

/* menu */
.menubar { display: flex; align-items: center; padding-left: 4px; gap: 12px; border-top: 1px solid #fff; border-bottom: 1px solid #a8a8a8; }
.menu-ic { margin: 0 -7px 0 0; }
.menubar .grip { margin-right: -10px; }
.mdi { margin-left: auto; display: flex; gap: 1px; }
.mb {
  width: 21px; height: 20px; display: flex; align-items: center; justify-content: center; background: #ecebf0;
  border: 1px solid; border-color: #fff #808080 #808080 #fff; font-size: 14px; font-weight: 700;
}
.mb-min { width: 9px; height: 2px; background: #000; margin-top: 10px; }
.mb-max { width: 9px; height: 7px; border: 1px solid #000; border-top-width: 2px; margin-top: 3px; box-shadow: 3px -3px 0 -1px #ecebf0, 3px -3px 0 0 #000; }

/* toolbars */
.tb { display: flex; align-items: center; overflow: hidden; border-bottom: 1px solid #a8a8a8; border-top: 1px solid #fff; }
.row1 { padding-left: 4px; }
.row3 { padding-left: 30px; }
.i { width: 24px; height: 22px; flex: none; display: flex; align-items: center; justify-content: center; }
.off { color: #a9a9ad; }
.sep { width: 8px; height: 22px; flex: none; position: relative; }
.sep::after { content: ""; position: absolute; left: 3px; top: 0; bottom: 0; width: 2px; background: #a8a8a8; border-right: 1px solid #fff; }
.grip { width: 4px; height: 22px; flex: none; border: 1px solid #a8a8a8; background: #fff; border-radius: 1px; }
.grip-a { margin-left: 9px; margin-right: 2px; }
.grip-b { margin-right: 3px; }
.grip-c { margin-left: 325px; margin-right: 2px; }
.row2 { padding: 0; }
.sel-tools { width: 81px; height: 26px; flex: none; display: flex; align-items: center; padding-left: 5px; border-right: 1px solid #b0b0b0; }
.sel-tools .i + .i { margin-left: 1px; }
.pressed { background: #f6f6f8; border: 1px solid; border-color: #808080 #fff #fff #808080; width: 23px; }
.pressed2 { background: #f6f6f8; border: 1px solid; border-color: #808080 #fff #fff #808080; }
.tcombo { display: flex; flex: none; height: 21px; background: #ecebf0; border: 2px solid; border-color: #888 #ecebf0 #ecebf0 #888; box-shadow: 1px 1px 0 #fff; }
.tc-zoom { width: 52px; margin-left: 5px; background: #fff; border-color: #a0a0a0 #d8d8d8 #d8d8d8 #a0a0a0; }
.tc-val { flex: 1; padding-left: 1px; font: 12px/15px "Liberation Mono", monospace; }
.tc-arrow { width: 16px; background: #ecebf0; border: 1px solid; border-color: #fff #808080 #808080 #fff; position: relative; }
.tc-arrow::after { content: ""; position: absolute; left: 3px; top: 5px; border: 4px solid transparent; border-top: 5px solid #000; border-bottom: 0; }
.tc-arrow.off::after { border-top-color: #9a9a9a; }
.sep-z { margin-left: 5px; }
.tc-font { width: 152px; margin-left: 6px; }
.tc-size { width: 66px; margin-left: 4px; }
.sep-f { margin-left: 5px; }
.fmt { font: 700 14px/22px "Liberation Serif", serif; }
.it { font-style: italic; }
.u { text-decoration: underline; }
.i-last { margin-left: -2px; }

/* main */
.main { display: grid; grid-template-columns: 28px 967px 29px; min-height: 0; }
.ltb { display: flex; flex-direction: column; align-items: center; padding: 4px 3px 0 0; border-right: 1px solid #a8a8a8; }
.hgrip { width: 23px; height: 4px; border: 1px solid #a8a8a8; background: #fff; flex: none; margin-bottom: 4px; }
.v { width: 24px; height: 22px; flex: none; display: flex; align-items: center; justify-content: center; }
.hsep { width: 27px; height: 6px; flex: none; margin-bottom: 1px; border-bottom: 2px solid #b0b0b0; }
.v-lines { margin-bottom: 2px; }
.center { display: flex; flex-direction: column; min-width: 0; }
.work { flex: 1; display: flex; min-height: 0; }
.vscroll { width: 17px; flex: none; display: flex; flex-direction: column; background: #f4f6fb; padding-top: 1px; }
.sb-btn { height: 17px; flex: none; background: linear-gradient(90deg, #cfdcf4, #c2d2ee); border: 1px solid #8fa3c8; border-radius: 2px; display: flex; align-items: center; justify-content: center; }
.chev { width: 7px; height: 7px; border: solid #4d6185; border-width: 2px 0 0 2px; transform: rotate(45deg); margin-top: 3px; }
.chev.down { transform: rotate(225deg); margin: -3px 0 0; }
.sb-thumb { flex: 1; margin: 3px 0; background: linear-gradient(90deg, #c4d8f6, #dceaff 35%, #cfe0fa 75%, #a8c2ea); border: 1px solid #a6bce0; border-radius: 2px; display: flex; align-items: center; justify-content: center; }
.sb-grip { width: 7px; height: 8px; border-top: 1px solid #8a9cbc; border-bottom: 1px solid #8a9cbc; background: linear-gradient(#8a9cbc, #8a9cbc) center / 100% 1px no-repeat; }
.canvas { flex: 1; background: #c0c0c0; padding: 15px 0 0 116px; min-width: 0; overflow: hidden; border-top: 1px solid #a0a0a0; }
.paper { display: block; background: #fff; box-shadow: 3px 3px 0 #808080; margin-top: -1px; }
.frame { fill: none; stroke: #000; }
.ticks { fill: none; stroke: #000; stroke-width: 1; }
.tb-title { font: 9px "Liberation Sans", sans-serif; fill: #777; }
.tb-a1 { font: 6px "Liberation Sans", sans-serif; fill: #888; }
.tb-tiny { font: 4px "Liberation Sans", sans-serif; fill: #aaa; }
.sheetbar { height: 18px; flex: none; display: flex; align-items: stretch; padding-left: 2px; background: #ecebf0; }
.snav { width: 14px; height: 18px; flex: none; font: 700 12px/15px "Liberation Sans", sans-serif; text-align: center; background: #ecebf0; border: 1px solid; border-color: #fff #808080 #808080 #fff; }
.tabshape { width: 66px; height: 18px; flex: none; margin-left: 2px; }
.sheet-label { width: 0; position: relative; left: -57px; font: 700 12px/16px "Liberation Mono", monospace; letter-spacing: .6px; white-space: nowrap; }
.sheet-line { flex: 1; height: 1px; background: #000; }
.rtb { display: flex; flex-direction: column; align-items: flex-end; padding: 4px 4px 0 0; position: relative; border-left: 1px solid #fff; }
.rnav { display: flex; flex-direction: column; width: 21px; padding-left: 2px; gap: 1px; border-left: 1px solid #555; margin-bottom: 3px; height: 60px; flex: none; }
.rb { height: 14px; width: 14px; flex: none; display: flex; flex-direction: column; align-items: center; justify-content: center; gap: 1px; background: #ecebf0; border: 1px solid; border-color: #fff #404040 #404040 #fff; }
.tr { border: 5px solid transparent; width: 0; height: 0; }
.tr.up { border-top: 0; border-bottom: 5px solid #000; }
.tr.down { border-bottom: 0; border-top: 5px solid #000; }
.bar-t, .bar-b { width: 9px; height: 1px; background: #000; flex: none; }
.vtab {
  writing-mode: vertical-rl; flex: none; width: 21px; display: flex; align-items: center; justify-content: center; padding-left: 2px;
  border: 1px solid #9a9a9a; border-left: 0; border-radius: 0 5px 5px 0; margin-bottom: 4px;
  font: 14px/20px "Noto Sans CJK SC", sans-serif; letter-spacing: 2px; background: #ecebf0;
}
.vtab.active { background: #fff; width: 21px; height: 44px; font-weight: 700; font-size: 15px; letter-spacing: 3px; border-color: #444; }
.h36 { height: 37px; }
.h37 { height: 37px; }
.h39 { height: 39px; }
.h67 { height: 68px; letter-spacing: 1px; }
.rblock { position: absolute; right: 0; bottom: 0; width: 29px; height: 52px; background: #fff; border-left: 1px solid #b0b0b0; border-bottom: 1px solid #b0b0b0; }

/* status */
.status { display: flex; align-items: center; padding-right: 2px; border-top: 1px solid #fff; font: 12px/14px "Liberation Sans", "Noto Sans CJK SC", sans-serif; }
.st-text { padding-left: 2px; }
.st-p { height: 18px; margin-left: 3px; border: 1px solid; border-color: #a0a0a0 #fff #fff #a0a0a0; line-height: 17px; padding-left: 1px; overflow: hidden; white-space: nowrap; }
.st-a { margin-left: auto; width: 116px; }
.st-b { width: 68px; font-size: 11px; padding-left: 0; }
.st-c { width: 53px; }

/* taskbar */
.taskbar {
  display: flex; align-items: center; color: #fff; overflow: hidden; position: relative;
  background: linear-gradient(#2d5fb8 0, #5f9ae6 2px, #4e86d4 6px, #3b70c0 16px, #2f5ea8 30px);
}
.start {
  width: 100px; height: 30px; flex: none; display: flex; align-items: center; padding-left: 10px; gap: 7px;
  background: linear-gradient(#5ab85a 0, #3f9f3f 5px, #2f8a2f 18px, #0f8a0f 30px); border-radius: 0 12px 12px 0; box-shadow: 1px 0 2px #1a3a70;
}
.flag { width: 20px; height: 20px; flex: none; }
.start-t { font: italic 300 18px/28px "Noto Sans CJK SC", sans-serif; color: #fff; letter-spacing: 1px; }
.quick { width: 103px; flex: none; display: flex; gap: 7px; align-items: center; padding-left: 11px; }
.more { font: 700 13px/10px "Liberation Sans", sans-serif; margin: -14px 0 0 6px; }
.tk {
  width: 158px; height: 24px; margin-right: 2px; flex: none; display: flex; align-items: center; gap: 5px; padding-left: 8px;
  font: 12px/16px "Liberation Sans", "Noto Sans CJK SC", sans-serif; letter-spacing: -.15px; white-space: nowrap; overflow: hidden;
  background: linear-gradient(#4f86d6, #3f72c2); border-radius: 3px; box-shadow: inset 1px 1px 0 #6f9ee4, inset -1px -1px 0 #2c5aa0;
}
.tk.active { background: linear-gradient(#1c4a96, #1e4fa0); box-shadow: inset 1px 1px 1px #123470, inset -1px -1px 0 #3f72c2; letter-spacing: 0; }
.ji {
  width: 16px; height: 16px; margin-left: 33px; flex: none; background: #e01010; border: 1px solid #fff; color: #fff;
  font: 700 12px/14px "Noto Sans CJK SC", sans-serif; text-align: center;
}
.tray {
  position: absolute; left: 912px; right: 0; top: 0; bottom: 0; display: flex; align-items: center; padding-left: 0;
  background: linear-gradient(#3a88dc 0, #6cb4f0 3px, #52a0e6 10px, #3f86d2 30px); border-left: 1px solid #2a5fa8;
}
.tray-back { margin-left: -8px; }
.tray-tight { margin-left: 3px; }
.clock { margin-left: 5px; font-size: 12px; }

/* dialog */
.dialog {
  position: absolute; left: 300px; top: 141px; width: 424px; height: 457px; background: #ecebf0;
  border: 2px solid #2a5eb0; border-top: 0; border-radius: 5px 5px 0 0; display: flex; flex-direction: column;
  font: 12px/14px "Liberation Sans", "Noto Sans CJK SC", sans-serif;
}
.dlg-title {
  height: 27px; margin: 0 -2px; flex: none; display: flex; align-items: center; padding: 0 5px 0 6px; border-radius: 5px 5px 0 0; color: #fff;
  background: linear-gradient(#2a5eb0 0, #80b5ec 2px, #5f96da 8px, #3a70c0 18px, #1d4ea2 27px);
}
.dlg-t { font: 700 16px/20px "Noto Sans CJK SC", sans-serif; letter-spacing: .8px; text-shadow: 1px 1px 0 #163a7a; }
.dlg-x {
  margin-left: auto; width: 20px; height: 20px; border: 1px solid #fff; border-radius: 3px; background: linear-gradient(135deg, #e8a080, #d8582c 60%, #c84818);
  font: 700 14px/18px "Liberation Sans", sans-serif; text-align: center; color: #fff;
}
.dlg-body { flex: 1; padding: 11px 11px 0 11px; }
.dlg-top { display: flex; gap: 14px; }
.grp { margin: 0; border: 1px solid #a8a8a8; box-shadow: 1px 1px 0 #fff; padding: 0 0 0 6px; min-width: 0; }
.grp legend { margin-left: -1px; padding: 0 3px; height: 14px; line-height: 14px; font-size: 13px; letter-spacing: 1px; }
.g-views legend { margin-left: 0; }
.g-dir legend { margin-left: -3px; }
.g-part { width: 311px; height: 115px; padding-top: 10px; }
.frow { display: flex; align-items: flex-start; gap: 6px; }
.frow2 { margin-top: 14px; gap: 0; }
.flabel { width: 71px; line-height: 18px; }
.combo { height: 20px; display: flex; background: #fff; border: 1px solid; border-color: #808080 #fff #fff #808080; box-shadow: inset 1px 1px 0 #c0c0c0; }
.c-path { width: 236px; }
.c-conf { width: 229px; }
.cv { flex: 1; overflow: hidden; white-space: nowrap; padding: 2px 0 0 3px; font-size: 11px; min-width: 0; }
.ca { width: 17px; flex: none; background: #ecebf0; border: 1px solid; border-color: #fff #808080 #808080 #fff; position: relative; }
.ca::after { content: ""; position: absolute; left: 3px; top: 6px; border: 4px solid transparent; border-top: 4px solid #000; border-bottom: 0; }
.btn {
  display: flex; align-items: center; justify-content: center; height: 22px; background: #ecebf0; font-size: 13px; letter-spacing: 1px;
  border: 1px solid; border-color: #fff #808080 #808080 #fff; box-shadow: 1px 1px 0 #b8b8b8; flex: none;
}
.b-browse { width: 57px; height: 20px; }
.dlg-btns { display: flex; flex-direction: column; width: 75px; gap: 3px; padding-top: 6px; }
.dlg-btns .btn { height: 23px; }
.dlg-btns .def { height: 22px; outline: 1px solid #000; outline-offset: -1px; box-shadow: 1px 1px 0 #000; }
.dlg-low { display: flex; gap: 6px; margin-top: 37px; }
.g-views { width: 229px; height: 252px; padding: 16px 0 0 5px; }
.thumbs { display: grid; grid-template-columns: repeat(4, 53px); column-gap: 2.300px; row-gap: 0; }
.th { margin: 0; height: 72px; }
.th-empty { display: block; }
.thumb { display: block; width: 53px; height: 52px; background: #c0c0c0; border: 1px solid #000; box-shadow: inset 0 0 0 1px #fff; outline: 0; }
.th figcaption { text-align: center; font-size: 12px; line-height: 16px; color: #111; }
.t { fill: #008080; stroke: #000; stroke-width: 3; stroke-linejoin: round; }
.tl { fill: none; stroke: #000; stroke-width: 2.500; }
.td { fill: none; stroke: #000; stroke-width: 2.500; stroke-dasharray: 6 4; }
.selbox { fill: none; stroke: #0000e0; stroke-width: 7; stroke-dasharray: 3 3; }
.selline { fill: none; stroke: #0000e0; stroke-width: 3; }
.g-dir { width: 163px; height: 252px; padding: 4px 0 0 8px; position: relative; }
.preview { display: block; border: 1px solid #777; }
.ctrls { display: flex; gap: 22px; margin-top: 3px; padding-left: 2px; }
.cstack { display: flex; flex-direction: column; gap: 1px; width: 32px; }
.cpair { display: flex; width: 32px; }
.cb { height: 16px; background: #ecebf0; border: 1px solid; border-color: #fff #808080 #808080 #fff; box-shadow: 1px 1px 0 #b0b0b0; display: flex; align-items: center; justify-content: center; }
.cb-v { height: 33px; width: 16px; }
.ar { width: 0; height: 0; border: solid transparent; }
.ar-up { border-width: 0 10px 9px; border-bottom-color: #000; }
.ar-down { border-width: 9px 10px 0; border-top-color: #000; }
.ar-left { border-width: 10px 10px 10px 0; border-right-color: #000; }
.ar-right { border-width: 10px 0 10px 10px; border-left-color: #000; }
.rot { width: 24px; height: 12px; }
.wide { display: flex; gap: 4px; margin-top: 4px; padding-left: 2px; }
.b-wide { width: 69px; height: 20px; }
.b-clip { justify-content: flex-start; overflow: hidden; padding-left: 3px; }
.clipt { white-space: nowrap; letter-spacing: 1.200px; }
.chk { display: flex; align-items: center; gap: 5px; width: 143px; height: 16px; margin-top: 1px; padding-left: 2px; background: #ecebf0; font-size: 13px; letter-spacing: 1px; white-space: nowrap; position: relative; }
.box { width: 12px; height: 13px; background: #fff; border: 1px solid; border-color: #888 #fff #fff #888; font: 700 11px/11px "DejaVu Sans", sans-serif; text-align: center; flex: none; }
```
